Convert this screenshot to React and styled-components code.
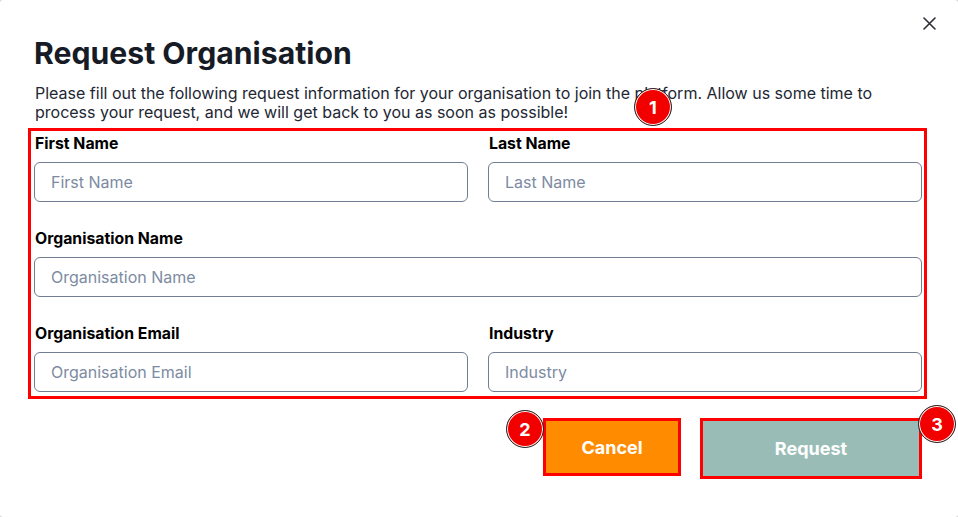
import React from "react";
import styled, { createGlobalStyle } from "styled-components";

const Global = createGlobalStyle`
  html, body { margin: 0; padding: 0; background: #d4d4d4; }
  body { font-family: Inter, "Noto Sans", sans-serif; }
  * { box-sizing: border-box; }
`;

const Modal = styled.div`
  position: relative;
  width: 958px;
  height: 517px;
  background: #ffffff;
  border-radius: 3px;
  padding: 34px 36px 0 34px;
`;

const Close = styled.button`
  position: absolute;
  top: 14px;
  right: 20px;
  width: 18px;
  height: 18px;
  padding: 0;
  border: none;
  background: transparent;
  display: flex;
  align-items: center;
  justify-content: center;
  color: #2b2f36;
`;

const Title = styled.h1`
  margin: 0;
  font-size: 30.2px;
  line-height: 38px;
  font-weight: 700;
  color: #161b26;
`;

const Description = styled.p`
  margin: 12px 0 0 1px;
  font-size: 16px;
  line-height: 19px;
  color: #222733;
  max-width: 888px;
`;

const FormWrap = styled.div`
  position: relative;
  margin-top: 12px;
`;

const Form = styled.div`
  display: grid;
  grid-template-columns: 434px 434px;
  column-gap: 20px;
  row-gap: 27px;
`;

const Field = styled.div`
  display: flex;
  flex-direction: column;
  grid-column: ${(p) => (p.$wide ? "1 / span 2" : "auto")};
`;

const Label = styled.label`
  font-size: 15.8px;
  line-height: 20px;
  font-weight: 700;
  color: #000;
  margin: 0 0 8px 1px;
`;

const Input = styled.input`
  height: 40px;
  width: 100%;
  border: 1px solid #707d92;
  border-radius: 6px;
  padding: 0 16px;
  font-family: Inter, "Noto Sans", sans-serif;
  font-size: 16px;
  color: #222;
  background: #fff;
  outline: none;
  &::placeholder { color: #7d8ba2; }
`;

const Highlight = styled.div`
  position: absolute;
  left: ${(p) => p.$l}px;
  top: ${(p) => p.$t}px;
  right: ${(p) => p.$r}px;
  bottom: ${(p) => p.$b}px;
  border: 3px solid #ff0000;
  pointer-events: none;
`;

const Badge = styled.div`
  position: absolute;
  left: ${(p) => p.$x - 19}px;
  top: ${(p) => p.$y - 19}px;
  width: 38px;
  height: 38px;
  border-radius: 50%;
  background: #f20000;
  border: 1.5px solid #2a2a2a;
  box-shadow: inset 0 0 0 1px #fff;
  color: #fff;
  font-weight: 700;
  font-size: 18px;
  display: flex;
  align-items: center;
  justify-content: center;
  z-index: 2;
`;

const Footer = styled.div`
  display: flex;
  justify-content: flex-end;
  align-items: flex-start;
  gap: 25px;
  margin-top: 29px;
  padding-right: 3px;
`;

const Button = styled.button`
  position: relative;
  width: ${(p) => p.$w}px;
  height: ${(p) => p.$h}px;
  border: none;
  background: ${(p) => p.$bg};
  color: #fff;
  font-family: Inter, "Noto Sans", sans-serif;
  font-size: 18px;
  font-weight: 700;
  padding: 0;
`;

export default function App() {
  return (
    <>
      <Global />
      <Modal>
        <Close aria-label="Close">
          <svg width="13" height="13" viewBox="0 0 13 13">
            <path d="M1 1 L12 12 M12 1 L1 12" stroke="currentColor" strokeWidth="1.6" strokeLinecap="round" />
          </svg>
        </Close>
        <Title>Request Organisation</Title>
        <Description>
          Please fill out the following request information for your organisation to join the platform. Allow us some time to process your request, and we will get back to you as soon as possible!
        </Description>
        <FormWrap>
          <Form>
            <Field>
              <Label>First Name</Label>
              <Input placeholder="First Name" />
            </Field>
            <Field>
              <Label>Last Name</Label>
              <Input placeholder="Last Name" />
            </Field>
            <Field $wide>
              <Label>Organisation Name</Label>
              <Input placeholder="Organisation Name" />
            </Field>
            <Field>
              <Label>Organisation Email</Label>
              <Input placeholder="Organisation Email" />
            </Field>
            <Field>
              <Label>Industry</Label>
              <Input placeholder="Industry" />
            </Field>
          </Form>
          <Highlight $l={-6} $t={-6} $r={-5} $b={-7} />
          <Badge $x={619} $y={-27}>1</Badge>
        </FormWrap>
        <Footer>
          <Button $w={132} $h={52} $bg="#ff8c00">
            Cancel
            <Highlight $l={-3} $t={-3} $r={-3} $b={-3} />
            <Badge $x={-21} $y={8}>2</Badge>
          </Button>
          <Button $w={216} $h={55} $bg="#99bdb6">
            Request
            <Highlight $l={-3} $t={-3} $r={-3} $b={-3} />
            <Badge $x={234} $y={3}>3</Badge>
          </Button>
        </Footer>
      </Modal>
    </>
  );
}
